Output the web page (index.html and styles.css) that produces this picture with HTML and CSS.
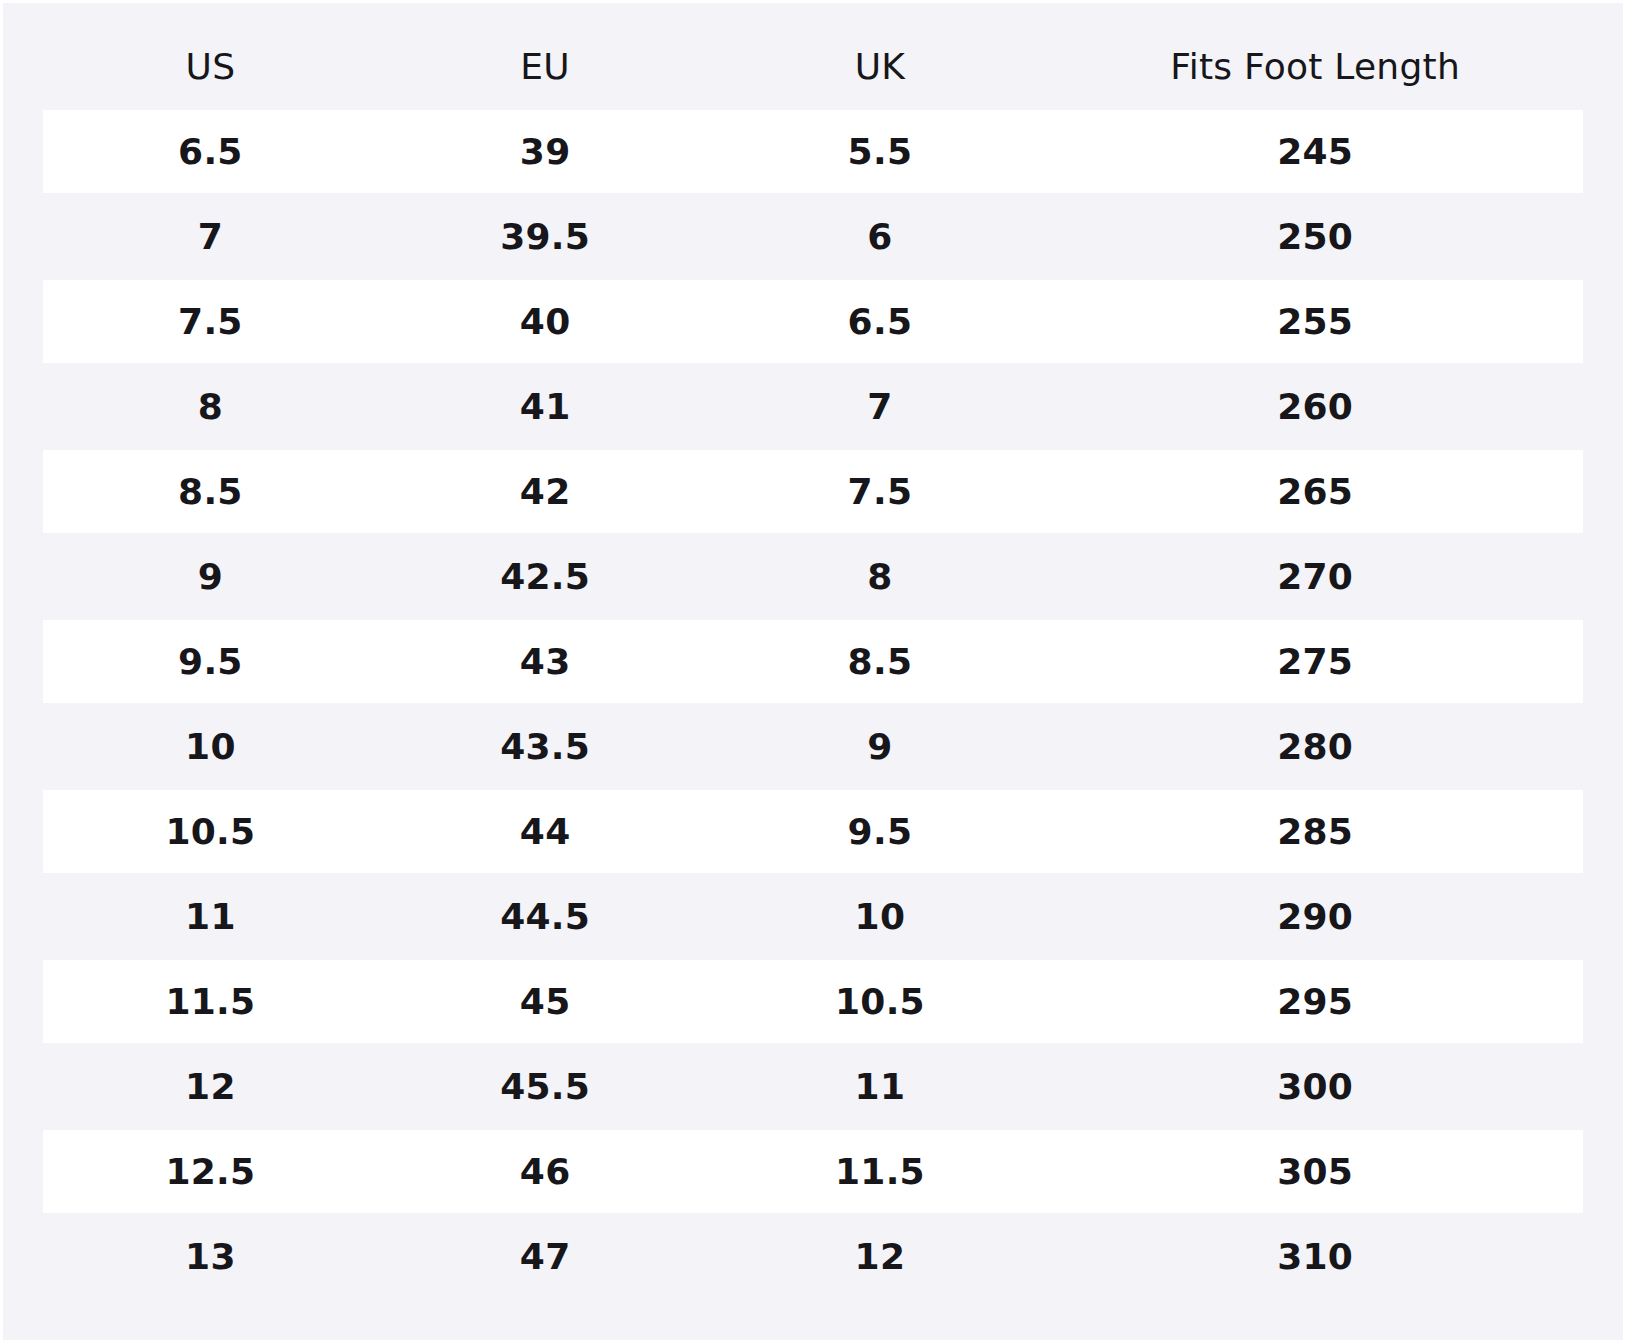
FILE: index.html
```html
<!DOCTYPE html>
<html lang="en">
<head>
<meta charset="utf-8">
<title>Size Chart</title>
<link rel="stylesheet" href="styles.css">
</head>
<body>
<div class="chart">
  <div class="row head">
    <div class="cell">US</div><div class="cell">EU</div><div class="cell">UK</div><div class="cell">Fits Foot Length</div>
  </div>
  <div class="row odd"><div class="cell">6.5</div><div class="cell">39</div><div class="cell">5.5</div><div class="cell">245</div></div>
  <div class="row even"><div class="cell">7</div><div class="cell">39.5</div><div class="cell">6</div><div class="cell">250</div></div>
  <div class="row odd"><div class="cell">7.5</div><div class="cell">40</div><div class="cell">6.5</div><div class="cell">255</div></div>
  <div class="row even"><div class="cell">8</div><div class="cell">41</div><div class="cell">7</div><div class="cell">260</div></div>
  <div class="row odd"><div class="cell">8.5</div><div class="cell">42</div><div class="cell">7.5</div><div class="cell">265</div></div>
  <div class="row even"><div class="cell">9</div><div class="cell">42.5</div><div class="cell">8</div><div class="cell">270</div></div>
  <div class="row odd"><div class="cell">9.5</div><div class="cell">43</div><div class="cell">8.5</div><div class="cell">275</div></div>
  <div class="row even"><div class="cell">10</div><div class="cell">43.5</div><div class="cell">9</div><div class="cell">280</div></div>
  <div class="row odd"><div class="cell">10.5</div><div class="cell">44</div><div class="cell">9.5</div><div class="cell">285</div></div>
  <div class="row even"><div class="cell">11</div><div class="cell">44.5</div><div class="cell">10</div><div class="cell">290</div></div>
  <div class="row odd"><div class="cell">11.5</div><div class="cell">45</div><div class="cell">10.5</div><div class="cell">295</div></div>
  <div class="row even"><div class="cell">12</div><div class="cell">45.5</div><div class="cell">11</div><div class="cell">300</div></div>
  <div class="row odd"><div class="cell">12.5</div><div class="cell">46</div><div class="cell">11.5</div><div class="cell">305</div></div>
  <div class="row even"><div class="cell">13</div><div class="cell">47</div><div class="cell">12</div><div class="cell">310</div></div>
</div>
</body>
</html>
```
FILE: styles.css
```css
html, body {
  background: #ffffff;
}
body {
  margin: 3px;
  font-family: "DejaVu Sans", "Liberation Sans", sans-serif;
  color: #16161b;
}
.chart {
  background: #f3f3f8;
  padding: 40px;
  width: 1540px;
}
.row {
  display: grid;
  grid-template-columns: 1fr 1fr 1fr 1.6fr;
  align-items: center;
  font-size: 36px;
  font-weight: bold;
  letter-spacing: 0.3px;
}
.row .cell {
  text-align: center;
  line-height: 42px;
}
.head {
  font-weight: normal;
  letter-spacing: 0.25px;
  height: 67px;
  align-items: start;
  padding-top: 3px;
  box-sizing: border-box;
}
.odd {
  background: #ffffff;
  height: 83px;
}
.even {
  height: 87px;
}
```
